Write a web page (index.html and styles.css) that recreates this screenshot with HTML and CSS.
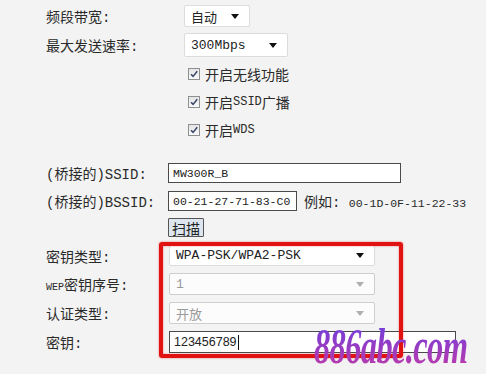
FILE: index.html
```html
<!DOCTYPE html>
<html lang="zh-CN">
<head>
    <meta charset="UTF-8">
    <meta name="viewport" content="width=device-width, initial-scale=1.0">
    <title>无线设置</title>
    <link rel="stylesheet" href="styles.css">
</head>
<body>
<div class="page">
  <div class="row r-band">
    <div class="label">频段带宽:</div>
    <div class="sel w-auto ml16"><span>自动</span><i class="arr"></i></div>
  </div>
  <div class="row r-rate">
    <div class="label">最大发送速率:</div>
    <div class="sel w-rate ml16"><span>300Mbps</span><i class="arr"></i></div>
  </div>

  <div class="checks">
    <label class="chk"><span class="box"><svg width="10" height="10" viewBox="0 0 10 10"><path d="M2 5.2 L4.1 7.4 L8.2 2.3" fill="none" stroke="#3b4a6b" stroke-width="1.6"/></svg></span>开启无线功能</label>
    <label class="chk"><span class="box"><svg width="10" height="10" viewBox="0 0 10 10"><path d="M2 5.2 L4.1 7.4 L8.2 2.3" fill="none" stroke="#3b4a6b" stroke-width="1.6"/></svg></span>开启<span class="sm">SSID</span>广播</label>
    <label class="chk"><span class="box"><svg width="10" height="10" viewBox="0 0 10 10"><path d="M2 5.2 L4.1 7.4 L8.2 2.3" fill="none" stroke="#3b4a6b" stroke-width="1.6"/></svg></span>开启<span class="sm">WDS</span></label>
  </div>

  <div class="row r-ssid">
    <div class="label">(桥接的)SSID:</div>
    <div class="inp w-ssid">MW300R_B</div>
  </div>
  <div class="row r-bssid">
    <div class="label">(桥接的)BSSID:</div>
    <div class="inp w-bssid">00-21-27-71-83-C0</div>
    <div class="hint">例如: <span class="mono">00-1D-0F-11-22-33</span></div>
  </div>
  <div class="row r-scan">
    <div class="label"></div>
    <div class="btn">扫描</div>
  </div>

  <div class="keys">
    <div class="row r-k1">
      <div class="label">密钥类型:</div>
      <div class="sel w-key"><span>WPA-PSK/WPA2-PSK</span><i class="arr"></i></div>
    </div>
    <div class="row r-k">
      <div class="label"><span class="xs">WEP</span>密钥序号:</div>
      <div class="sel w-key off"><span>1</span><i class="arr"></i></div>
    </div>
    <div class="row r-k">
      <div class="label">认证类型:</div>
      <div class="sel w-key off"><span>开放</span><i class="arr"></i></div>
    </div>
    <div class="row r-k">
      <div class="label">密钥:</div>
      <div class="inp w-pass pass">123456789<i class="caret"></i></div>
    </div>
    <div class="frame"></div>
  </div>

  <div class="mark">886abc.com</div>
</div>
</body>
</html>
```

FILE: styles.css
```css
body {
    margin: 0;
    background: #f3f3f3;
    font-family: "Liberation Mono", "Noto Sans CJK SC", monospace;
    font-size: 14px;
    color: #2a2a2a;
}

.page {
    position: relative;
    width: 486px;
    height: 374px;
    overflow: hidden;
    padding: 5px 0 0 46px;
    box-sizing: border-box;
}

.row { display: flex; align-items: center; }

.label {
    width: 122px;
    flex: none;
    white-space: nowrap;
    color: #2a2a2a;
}

.ml16 { margin-left: 16px; }

.r-band { height: 22px; }
.r-rate { height: 24px; margin-top: 6px; }
.r-ssid { height: 20px; margin-top: 19px; }
.r-bssid { height: 20px; margin-top: 8px; }
.r-scan { height: 19px; margin-top: 7px; }

/* selects */
.sel {
    display: flex;
    align-items: center;
    justify-content: space-between;
    box-sizing: border-box;
    height: 100%;
    padding: 0 10px 0 6px;
    background: #fff;
    border: 1px solid #dcdcdc;
    border-radius: 2px;
    font-size: 13px;
    color: #222;
}
.w-auto { width: 66px; }
.w-rate { width: 104px; }
.w-key { width: 206px; margin-left: 1px; }

.arr {
    width: 0;
    height: 0;
    border-left: 4px solid transparent;
    border-right: 4px solid transparent;
    border-top: 5px solid #111;
}

.sel.off { border-color: #cfcfcf; color: #9a9a9a; background: #fcfcfc; }
.sel.off .arr { border-top-color: #b0b0b0; }

/* checkboxes */
.checks { margin: 3px 0 0 142px; }
.chk {
    display: flex;
    align-items: center;
    height: 28px;
}
.box {
    width: 10px;
    height: 10px;
    border: 1px solid #8e8f8f;
    background: linear-gradient(#e4e4e4, #fafafa);
    margin-right: 5px;
    display: flex;
}
.sm { font-size: 12px; }
.xs { font-size: 10px; }

/* text inputs */
.inp {
    box-sizing: border-box;
    height: 100%;
    display: flex;
    align-items: center;
    padding-left: 4px;
    background: #fff;
    border: 1px solid #4a4a4a;
    font-size: 11.5px;
    color: #222;
}
.w-ssid { width: 233px; }
.w-bssid { width: 129px; }
.w-pass { width: 287px; margin-left: 1px; }
.pass { font-family: "Liberation Sans", sans-serif; font-size: 12.5px; }
.caret { width: 1px; height: 15px; background: #111; margin-left: 1px; }

.hint { margin-left: 7px; font-size: 14px; }
.mono { font-size: 11.5px; }

.btn {
    box-sizing: border-box;
    height: 100%;
    padding: 0 3px;
    display: flex;
    align-items: center;
    background: #dde6ee;
    border: 1px solid #555;
    border-radius: 1px;
    color: #222;
}

/* key section */
.keys { position: relative; margin-top: 8px; }
.r-k1 { height: 21px; }
.r-k { height: 22px; margin-top: 7px; }
.r-k:last-of-type { height: 21px; }

.frame {
    position: absolute;
    left: 113px;
    top: -3px;
    width: 244px;
    height: 116px;
    box-sizing: border-box;
    border: 4px solid #e01212;
    border-radius: 3px;
    box-shadow: 0 0 2px rgba(230, 0, 0, 0.6), inset 0 0 2px rgba(230, 0, 0, 0.5);
}

.mark {
    position: absolute;
    left: 314px;
    top: 321px;
    font-family: "Liberation Serif", serif;
    font-style: italic;
    font-weight: bold;
    font-size: 50px;
    line-height: 50px;
    transform: scaleX(0.65);
    transform-origin: left top;
    background: linear-gradient(#6a3ee0, #c23aa8);
    -webkit-background-clip: text;
    background-clip: text;
    color: transparent;
    letter-spacing: -1px;
}
```
